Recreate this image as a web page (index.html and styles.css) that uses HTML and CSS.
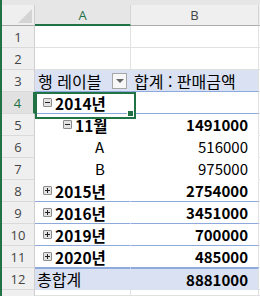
FILE: index.html
```html
<!DOCTYPE html>
<html lang="ko">
<head>
<meta charset="utf-8">
<link rel="stylesheet" href="styles.css">
</head>
<body>
<div class="sheet">
  <div class="band"></div>
  <div class="grid">
    <div class="corner"><span class="tri"></span></div>
    <div class="colhead sel">A</div>
    <div class="colhead">B</div>
    <div class="colhead rest"></div>

    <div class="rowhead">1</div><div class="cell"></div><div class="cell"></div><div class="cell rest"></div>
    <div class="rowhead">2</div><div class="cell"></div><div class="cell"></div><div class="cell rest"></div>

    <div class="rowhead">3</div>
    <div class="cell pv head a"><span class="ko">행 레이블</span><span class="dd"><span class="ddtri"></span></span></div>
    <div class="cell pv head b"><span class="ko">합계 : 판매금액</span></div>
    <div class="cell rest"></div>

    <div class="rowhead selrow">4</div>
    <div class="cell pv line a active"><span class="bx minus"></span><b>2014년</b><span class="handle"></span></div>
    <div class="cell pv line num"></div>
    <div class="cell rest"></div>

    <div class="rowhead">5</div>
    <div class="cell pv a lv2"><span class="bx minus"></span><b>11월</b></div>
    <div class="cell pv num"><b>1491000</b></div>
    <div class="cell rest"></div>

    <div class="rowhead">6</div>
    <div class="cell pv a lv3">A</div>
    <div class="cell pv num reg">516000</div>
    <div class="cell rest"></div>

    <div class="rowhead">7</div>
    <div class="cell pv a lv3">B</div>
    <div class="cell pv num reg">975000</div>
    <div class="cell rest"></div>

    <div class="rowhead">8</div>
    <div class="cell pv line a"><span class="bx plus"></span><b>2015년</b></div>
    <div class="cell pv line num"><b>2754000</b></div>
    <div class="cell rest"></div>

    <div class="rowhead">9</div>
    <div class="cell pv line a"><span class="bx plus"></span><b>2016년</b></div>
    <div class="cell pv line num"><b>3451000</b></div>
    <div class="cell rest"></div>

    <div class="rowhead">10</div>
    <div class="cell pv line a"><span class="bx plus"></span><b>2019년</b></div>
    <div class="cell pv line num"><b>700000</b></div>
    <div class="cell rest"></div>

    <div class="rowhead">11</div>
    <div class="cell pv line a"><span class="bx plus"></span><b>2020년</b></div>
    <div class="cell pv line num"><b>485000</b></div>
    <div class="cell rest"></div>

    <div class="rowhead">12</div>
    <div class="cell pv total a"><span class="ko">총합계</span></div>
    <div class="cell pv total num"><b>8881000</b></div>
    <div class="cell rest"></div>

    <div class="rowhead short"></div><div class="cell"></div><div class="cell"></div><div class="cell rest"></div>
  </div>
</div>
</body>
</html>
```

FILE: styles.css
```css
* { box-sizing: border-box; }
html, body { margin: 0; padding: 0; background: #ffffff; }
body { width: 260px; height: 296px; overflow: hidden; font-family: "Noto Sans CJK KR", "Noto Sans", sans-serif; color: #000; }
.sheet { border-left: 2px solid #217346; height: 296px; overflow: hidden; }
.band { height: 5px; background: #e6e6e6; }
.grid {
  display: grid;
  grid-template-columns: 33px 96px 128px 1px;
  grid-template-rows: 21px repeat(12, 22px) 6px;
}
.corner {
  background: #efefef;
  border-right: 1px solid #cfcfcf;
  border-bottom: 1px solid #ababab;
  position: relative;
}
.tri {
  position: absolute; right: 2px; bottom: 2px;
  width: 0; height: 0;
  border-left: 14px solid transparent;
  border-bottom: 14px solid #d4d4d4;
}
.colhead {
  background: #efefef;
  border-right: 1px solid #d4d4d4;
  border-bottom: 1px solid #ababab;
  display: flex; align-items: center; justify-content: center;
  font-family: "Open Sans", "Noto Sans", sans-serif;
  font-size: 13px; color: #444;
}
.colhead.sel { color: #1e7145; background: #e6e6e6; border-bottom: 2px solid #217346; }
.colhead.rest { border-right: 0; }
.rowhead {
  background: #efefef;
  border-right: 1px solid #cfcfcf;
  border-bottom: 1px solid #dadada;
  display: flex; align-items: center; justify-content: center;
  font-family: "Open Sans", "Noto Sans", sans-serif;
  font-size: 13px; color: #444;
}
.rowhead.short { border-bottom: 0; }
.rowhead.selrow { background: #e1e1e1; color: #1e7145; border-right: 2px solid #217346; }
.cell {
  border-right: 1px solid #e1e1e1;
  border-bottom: 1px solid #e1e1e1;
  display: flex; align-items: center;
  font-size: 15px;
  white-space: nowrap;
}
.cell.rest { border-right: 0; }
.ko { font-size: 16px; }
.pv { background: #ffffff; border-right-color: transparent; border-bottom-color: transparent; }
.pv.b { border-right-color: #e1e1e1; }
.pv.num { justify-content: flex-end; padding-right: 10px; border-right-color: #e1e1e1; }
.pv.head { background: #d9e1f2; border-bottom-color: #8ea9db; }
.pv.head.a { padding-left: 3px; justify-content: space-between; padding-right: 3px; }
.pv.head.b { padding-left: 3px; }
.pv.line { border-bottom-color: #8ea9db; }
.pv.total { background: #d9e1f2; border-top: 1px solid #8ea9db; }
.pv.total.a { padding-left: 2px; }
.a { padding-left: 8px; }
.lv2 { padding-left: 28px; }
.lv3 { padding-left: 60px; }
b { font-weight: 700; }
.line b, .lv2 b { font-size: 15.5px; }
.num b { font-size: 15px; }
.reg { font-weight: 400; }
.bx {
  width: 9px; height: 9px;
  border: 1px solid #8c8c8c;
  background: #e3e3e3;
  border-radius: 1px;
  margin-right: 3px;
  position: relative;
  flex: none;
}
.bx::before {
  content: ""; position: absolute; left: 1px; top: 3px; width: 5px; height: 1px; background: #222;
}
.bx.plus::after {
  content: ""; position: absolute; left: 3px; top: 1px; width: 1px; height: 5px; background: #222;
}
.dd {
  width: 15px; height: 16px;
  border: 1px solid #a6a6a6;
  background: #f7f7f7;
  display: flex; align-items: center; justify-content: center;
}
.ddtri {
  width: 0; height: 0;
  border-left: 4px solid transparent;
  border-right: 4px solid transparent;
  border-top: 4px solid #666;
}
.active { position: relative; }
.active::before {
  content: ""; position: absolute; left: 0; top: 0; width: 97px; height: 23px;
  border: 2px solid #217346;
}
.handle {
  position: absolute; left: 92px; top: 18px;
  width: 7px; height: 7px;
  background: #217346; border: 1px solid #ffffff;
  z-index: 2;
}
```
